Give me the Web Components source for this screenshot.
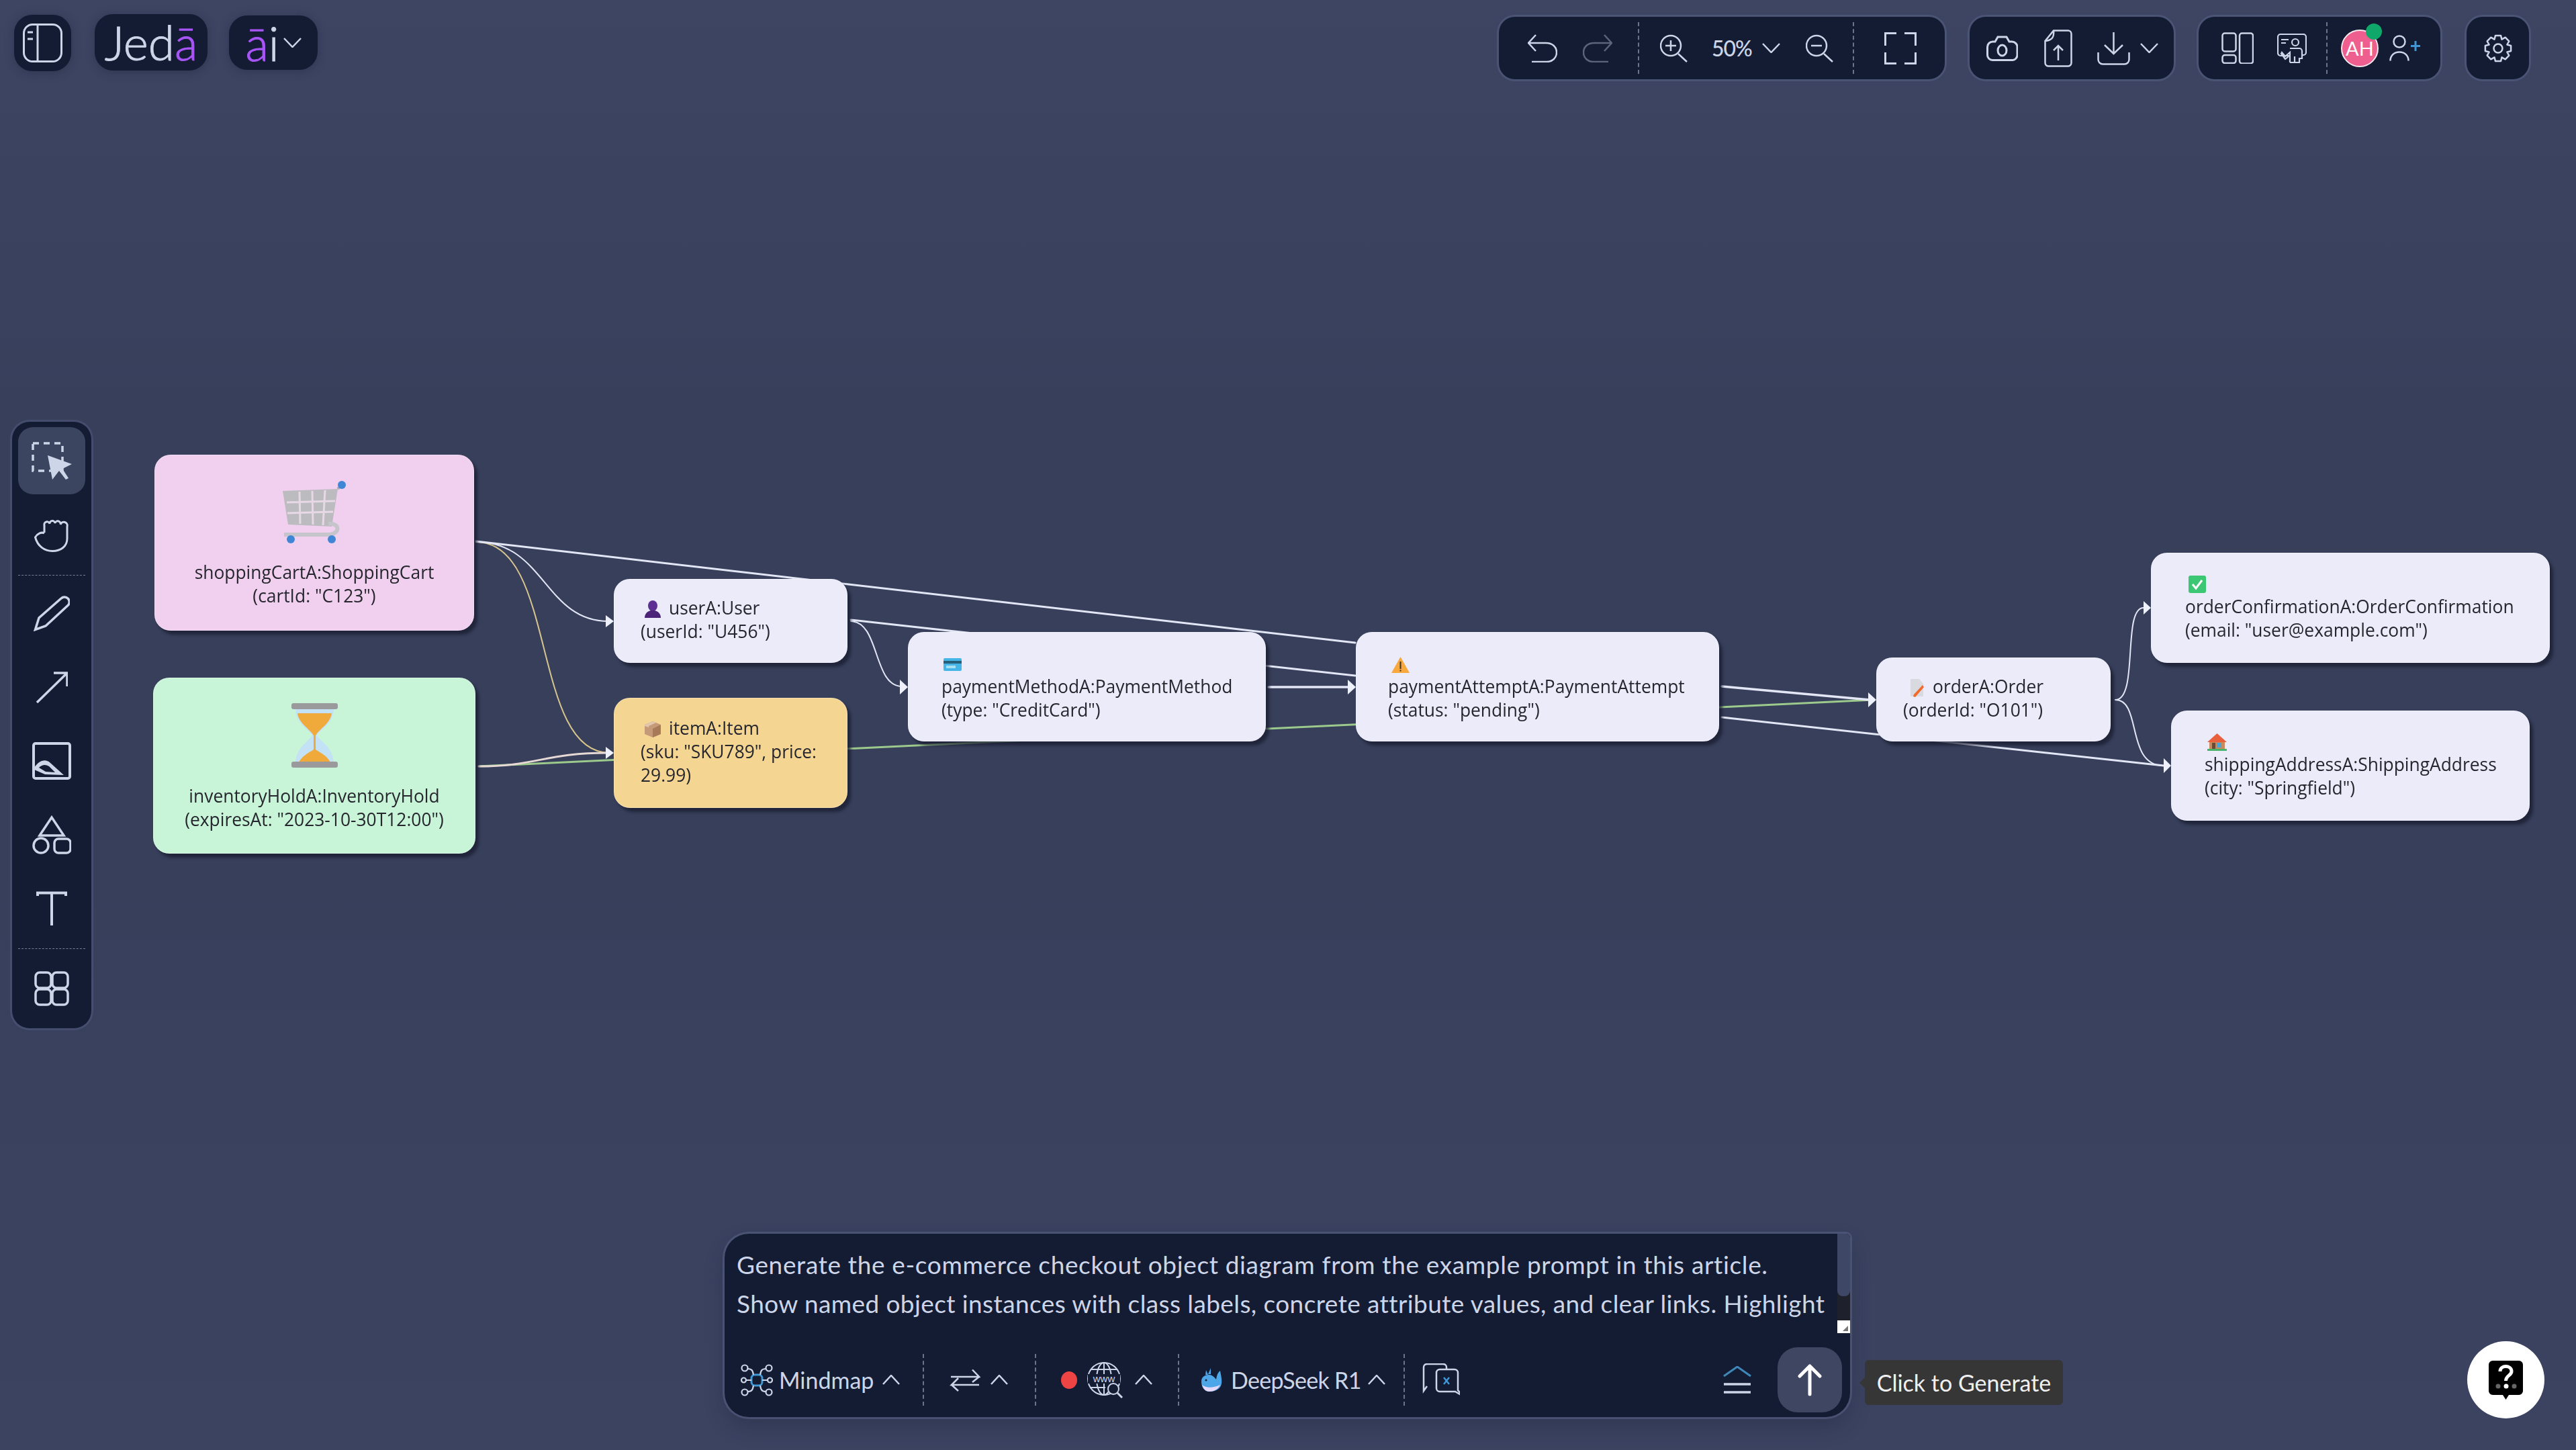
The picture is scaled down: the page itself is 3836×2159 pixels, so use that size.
<!DOCTYPE html>
<html lang="en"><head><meta charset="utf-8"><title>Jedā</title>
<style>html,body{margin:0;padding:0;background:#393f5b}</style></head>
<body>
<jeda-app>
  <diagram-canvas>
    <diagram-node x="230" y="677" w="476" h="262" bg="#f0d0ee" center>
      <ui-icon name="cart" block></ui-icon>shoppingCartA:ShoppingCart<br>(cartId: "C123")
    </diagram-node>
    <diagram-node x="228" y="1009" w="480" h="262" bg="#c8f5d8" center>
      <ui-icon name="hourglass" block></ui-icon>inventoryHoldA:InventoryHold<br>(expiresAt: "2023-10-30T12:00")
    </diagram-node>
    <diagram-node x="914" y="862" w="348" h="125" pad="40" lift><ui-icon name="user" gap="11" ml="5"></ui-icon>userA:User<br>(userId: "U456")</diagram-node>
    <diagram-node x="914" y="1039" w="348" h="164" pad="40" lift bg="#f5d592"><ui-icon name="box" gap="11" ml="5"></ui-icon>itemA:Item<br>(sku: "SKU789", price:<br>29.99)</diagram-node>
    <diagram-node x="1352" y="941" w="533" h="163" pad="50"><ui-icon name="card" ml="3"></ui-icon><br>paymentMethodA:PaymentMethod<br>(type: "CreditCard")</diagram-node>
    <diagram-node x="2019" y="941" w="541" h="163" pad="48"><ui-icon name="warn" ml="5"></ui-icon><br>paymentAttemptA:PaymentAttempt<br>(status: "pending")</diagram-node>
    <diagram-node x="2794" y="979" w="349" h="125" pad="40" lift><ui-icon name="order" gap="13" ml="9"></ui-icon>orderA:Order<br>(orderId: "O101")</diagram-node>
    <diagram-node x="3203" y="823" w="594" h="164" pad="51" lift><ui-icon name="check" ml="5"></ui-icon><br>orderConfirmationA:OrderConfirmation<br>(email: "user@example.com")</diagram-node>
    <diagram-node x="3233" y="1058" w="534" h="164" pad="50" lift><ui-icon name="house" ml="4"></ui-icon><br>shippingAddressA:ShippingAddress<br>(city: "Springfield")</diagram-node>
  </diagram-canvas>

  <top-bar>
    <brand-chip w="85" h="84" mt="-3"><ui-icon name="sidebar"></ui-icon></brand-chip>
    <brand-chip w="168" h="84" ml="35" mt="-4"><brand-word><span>Jed</span><b>ā</b></brand-word></brand-chip>
    <brand-chip w="132" h="81" ml="32" mt="-2"><brand-word><b>ā</b><span>i</span></brand-word><ui-icon name="chevdown" ml="6"></ui-icon></brand-chip>
    <tool-pill w="664" ml="auto">
      <ui-icon name="undo" ml="43"></ui-icon>
      <ui-icon name="redo" ml="38"></ui-icon>
      <dash-sep ml="38"></dash-sep>
      <ui-icon name="zoomin" ml="31"></ui-icon>
      <zoom-level>50%</zoom-level>
      <ui-icon name="chevdown" ml="14"></ui-icon>
      <ui-icon name="zoomout" ml="38"></ui-icon>
      <dash-sep ml="29"></dash-sep>
      <ui-icon name="full" ml="45"></ui-icon>
    </tool-pill>
    <tool-pill w="304" ml="37">
      <ui-icon name="camera" ml="25"></ui-icon>
      <ui-icon name="fileup" ml="39"></ui-icon>
      <ui-icon name="download" ml="37"></ui-icon>
      <ui-icon name="chevdown" ml="15"></ui-icon>
    </tool-pill>
    <tool-pill w="360" ml="37">
      <ui-icon name="layout" ml="34"></ui-icon>
      <ui-icon name="presenter" ml="35"></ui-icon>
      <dash-sep ml="29"></dash-sep>
      <user-avatar>AH</user-avatar>
      <ui-icon name="adduser" ml="16"></ui-icon>
    </tool-pill>
    <tool-pill w="93" ml="39" center><ui-icon name="gear"></ui-icon></tool-pill>
  </top-bar>

  <tool-rail>
    <rail-item active><ui-icon name="select"></ui-icon></rail-item>
    <rail-item style="margin-top:9px"><ui-icon name="hand"></ui-icon></rail-item>
    <rail-rule style="margin-top:11px"></rail-rule>
    <rail-item short style="margin-top:1px"><ui-icon name="pencil"></ui-icon></rail-item>
    <rail-item short><ui-icon name="arrow"></ui-icon></rail-item>
    <rail-item short><ui-icon name="frame"></ui-icon></rail-item>
    <rail-item short><ui-icon name="shapes"></ui-icon></rail-item>
    <rail-item short><ui-icon name="type"></ui-icon></rail-item>
    <rail-rule style="margin-top:4px"></rail-rule>
    <rail-item short style="margin-top:4px"><ui-icon name="grid"></ui-icon></rail-item>
  </tool-rail>

  <prompt-dock>
    <prompt-panel>
      <span slot="text" style="letter-spacing:.64px">Generate the e-commerce checkout object diagram from the example prompt in this article.</span>
      <span slot="text" style="display:block;letter-spacing:.4px">Show named object instances with class labels, concrete attribute values, and clear links. Highlight</span>
      <ui-icon name="mindmap"></ui-icon>
      <row-label ml="9" w="140">Mindmap</row-label>
      <ui-icon name="chevup" ml="14"></ui-icon>
      <dash-sep ml="34"></dash-sep>
      <ui-icon name="swap" ml="38"></ui-icon>
      <ui-icon name="chevup" ml="15"></ui-icon>
      <dash-sep ml="40"></dash-sep>
      <ui-icon name="dot" ml="37"></ui-icon>
      <ui-icon name="globe" ml="14"></ui-icon>
      <ui-icon name="chevup" ml="18"></ui-icon>
      <dash-sep ml="38"></dash-sep>
      <ui-icon name="whale" ml="30"></ui-icon>
      <row-label ml="13" w="191" style="letter-spacing:-.7px">DeepSeek R1</row-label>
      <ui-icon name="chevup" ml="13"></ui-icon>
      <dash-sep ml="27"></dash-sep>
      <ui-icon name="chat" ml="26"></ui-icon>
      <ui-icon name="expand" ml="auto"></ui-icon>
      <send-button></send-button>
    </prompt-panel>
    <hint-tip>Click to Generate</hint-tip>
    <help-button></help-button>
  </prompt-dock>
</jeda-app>

<script>
const INK='#cdd5e8';
function cog(cx,cy,ro,ri,n){let p=[];const s=Math.PI*2/n;for(let i=0;i<n;i++){const a=i*s-Math.PI/2;
 [[-.5,ri],[-.26,ro],[.26,ro],[.5,ri]].forEach(([k,r])=>{p.push((cx+r*Math.cos(a+k*s)).toFixed(1)+' '+(cy+r*Math.sin(a+k*s)).toFixed(1));});}
 return 'M'+p.join(' L')+'Z';}
const ICONS={
 sidebar:[59,58,3,`<rect x="1.5" y="1.5" width="56" height="55" rx="13"/><path d="M22 2V56M7 13h8M7 23h8"/>`],
 chevdown:[27,15,2.5,`<path d="M1 1L13.5 14L26 1"/>`],
 chevup:[26,15,2.5,`<path d="M1 14L13 1L25 14"/>`],
 undo:[44,42,2.5,`<path d="M12 1L1 13L12 25M1 13H27C37 13 43 19 43 27C43 35 37 41 28 41H6"/>`],
 redo:[44,42,2.5,`<g stroke="#5d6479"><path d="M32 1L43 13L32 25M43 13H17C7 13 1 19 1 27C1 35 7 41 16 41H38"/></g>`],
 zoomin:[41,42,2.5,`<circle cx="16" cy="17" r="15"/><path d="M27 29L40 41M16 9V25M8 17H24"/>`],
 zoomout:[41,42,2.5,`<circle cx="16" cy="17" r="15"/><path d="M27 29L40 41M8 17H24"/>`],
 full:[48,48,3,`<path d="M1.5 20V1.5H18M30 1.5H46.5V20M46.5 30V46.5H30M18 46.5H1.5V30"/>`],
 camera:[47,38,3,`<path d="M10 9H13L17 2H30L34 9H38A8 8 0 0 1 46 17V29A7.5 7.5 0 0 1 38 36.5H9A7.5 7.5 0 0 1 1.5 29V17A8 8 0 0 1 10 9Z"/><ellipse cx="23.5" cy="22" rx="6.5" ry="8"/>`],
 fileup:[42,56,2.5,`<path d="M14 1.5H36A5 5 0 0 1 40.500 6.500V49.500A5 5 0 0 1 36 54.500H6A5 5 0 0 1 1.500 49.500V17ZM14 1.500C15 10 13 16 1.500 17M21 46V24M14 31L21 24L28 31"/>`],
 download:[49,50,2.5,`<path d="M24.5 1V33M11 20L24.500 33L38 20M1.500 31V41A7 7 0 0 0 8.500 48.500H40.500A7 7 0 0 0 47.500 41V31"/>`],
 layout:[48,47,2.5,`<rect x="1.500" y="1.500" width="20" height="27" rx="3.500"/><rect x="1.500" y="34" width="20" height="12" rx="3.500"/><rect x="27" y="1.500" width="20" height="45" rx="3.500"/>`],
 presenter:[44,44,2.200,`<path d="M18 33H5A4 4 0 0 1 1 29V5A4 4 0 0 1 5 1H39A4 4 0 0 1 43 5V28A4 4 0 0 1 39 32H38"/><circle cx="27" cy="13" r="5"/><path d="M6 9H17M6 14H13M19 43V28L12 34L7 28L6 30L12 38L17 34M19 22H33A4 4 0 0 1 37 26V37H33V43H19M26 43V34"/>`],
 adduser:[46,39,2.500,`<circle cx="15" cy="10" r="8.500"/><path d="M1.500 38.500C1.500 31 7 25.500 15 25.500C23 25.500 28.500 31 28.500 38.500"/><path stroke="#3f97d6" stroke-width="3" d="M39 9V24M32 16.500H46"/>`],
 gear:[42,42,2.500,`<path stroke-linejoin="round" d="${cog(21,21,19.500,14.500,8)}"/><circle cx="21" cy="21" r="6.500"/>`],
 select:[60,56,3.500,`<rect x="2" y="2" width="44" height="41" stroke-dasharray="9 7"/><path fill="${INK}" stroke="none" d="M24 20L60 33L46 40L55 54L51 56L41 43L31 56Z"/>`],
 hand:[52,53,3,`<path d="M15 24V13A4 4 0 0 1 23 11A4 4 0 0 1 31 10A4 4 0 0 1 39 12A4 4 0 0 1 49 15V33C49 45 39 51.500 27 51.500C15 51.500 5 44 1.500 31C4 26 11 22.500 15 25"/>`],
 pencil:[54,54,3.500,`<path d="M2.500 51.500L8 34L41 5A7 7 0 0 1 51 15.500L18 46Z"/>`],
 arrow:[47,47,3.500,`<path d="M1 46L46 2M26 2H46V22"/>`],
 frame:[58,56,4,`<rect x="2" y="2" width="54" height="52" rx="3"/><path fill="${INK}" stroke="none" d="M3 38C10 27 20 24 27 31L47 49L19 48L3 41Z"/><path fill="#141c33" stroke="none" d="M10 38C15 33 20 33 25 36L34 45L20 44Z"/>`],
 shapes:[58,58,3.500,`<path d="M29 3L11 30H47Z"/><circle cx="13" cy="45" r="11"/><rect x="33" y="35" width="24" height="21" rx="6"/>`],
 type:[46,52,4,`<path d="M2 7V2.500H44V7M23 2.500V51"/>`],
 grid:[52,52,3.500,`<rect x="2" y="2" width="23" height="23" rx="6"/><rect x="27" y="2" width="23" height="23" rx="6"/><rect x="2" y="27" width="23" height="23" rx="6"/><rect x="27" y="27" width="23" height="23" rx="6"/>`],
 mindmap:[48,48,2.200,`<rect x="16" y="16" width="16" height="16" rx="5" stroke="#3f97d6" stroke-width="3"/><circle cx="6" cy="6" r="4.500"/><circle cx="42" cy="6" r="4.500"/><circle cx="4.500" cy="24" r="3.500"/><circle cx="43.500" cy="24" r="3.500"/><circle cx="6" cy="42" r="4.500"/><circle cx="42" cy="42" r="4.500"/><path d="M10 7C17 7 18 10 19 16M38 7C31 7 30 10 29 16M8 24H16M32 24H40M10 41C17 41 18 38 19 32M38 41C31 41 30 38 29 32"/>`],
 swap:[46,34,2.500,`<path d="M2 12H44L34 1.500M44 12L34 20M44 24H3L13 14M3 24L13 33"/>`],
 dot:[24,26,0,`<ellipse cx="12" cy="13" rx="12" ry="13" fill="#ef4444"/>`],
 globe:[54,54,2,`<circle cx="26" cy="25" r="24"/><ellipse cx="26" cy="25" rx="11" ry="24"/><path d="M26 1V49M6 11H46M5 38H28" stroke-width="2"/><rect x="2" y="18" width="48" height="14" fill="#141c33" stroke="none"/><text x="26" y="30" text-anchor="middle" font-family="Liberation Sans,sans-serif" font-size="15" fill="${INK}" stroke="none">www</text><circle cx="40" cy="40" r="8" fill="#141c33"/><path d="M46 46L53 53" stroke-width="3"/>`],
 whale:[34,36,0,`<path fill="#4da6e8" d="M3 20C3 11 11 10 15 10C19 10 23 14 25 17C26 13 26 8 31 4C32 10 34 17 33 23C32 31 24 35 15 35C7 35 3 28 3 20Z"/><path fill="#e6d8f8" d="M4 25C10 30 20 30 31 25C28 32 21 35 15 35C9 35 6 31 4 25Z"/><path fill="#4da6e8" d="M10 3L13 10H9ZM17 0L17 9H13Z"/><circle cx="10" cy="18" r="1.500" fill="#123"/>`],
 chat:[56,50,2.500,`<path d="M36 8V6A5 5 0 0 0 31 1H7A5 5 0 0 0 2 6V41L7 34"/><path d="M13 14A5 5 0 0 1 18 9H40A5 5 0 0 1 45 14V40L53 49L41 42H18A5 5 0 0 1 13 37Z" transform="translate(8 0)"/><path stroke="#3f97d6" d="M32 21L40 31M40 21L32 31"/>`],
 expand:[42,42,3,`<path stroke="#3f87b8" d="M1 15L21 1L41 15"/><path d="M1 27H41M1 39H41" stroke-width="3.500"/>`],
 cart:[95,94,0,`<path fill="#bcbcc0" d="M0 15L82 12L73 68L8 65Z"/><g stroke="#e7d8e6" stroke-width="3" fill="none"><path d="M6 32L78 30M7 48L75 46M25 16L26 64M44 15L45 65M63 14L60 66"/></g><path d="M82 12L88 5" stroke="#a9a9ae" stroke-width="4"/><circle cx="88" cy="6" r="6" fill="#3f86d6"/><path d="M68 64C85 62 86 78 70 80H2" fill="none" stroke="#c5c5cb" stroke-width="6"/><circle cx="12" cy="87" r="6" fill="#3f86d6"/><circle cx="73" cy="87" r="6" fill="#3f86d6"/>`],
 hourglass:[69,96,0,`<path fill="#c3e2f5" d="M6 8H63C63 30 42 40 38 48C42 56 63 66 63 90H6C6 66 27 56 31 48C27 40 6 30 6 8Z"/><path fill="#f0aa3c" d="M9 15H60C58 30 42 38 36 48V72H33V48C27 38 11 30 9 15Z"/><path fill="#f0aa3c" d="M11 88C16 78 26 74 34.500 68C43 74 53 78 58 88Z"/><rect width="69" height="9" rx="3" fill="#9a9a9c"/><rect y="87" width="69" height="9" rx="3" fill="#9a9a9c"/>`],
 user:[26,26,0,`<ellipse cx="13" cy="8" rx="7" ry="8" fill="#5d2f92"/><path fill="#4b2479" d="M1 26C1 19 6 16 10 15H16C20 16 25 19 25 26Z"/>`],
 box:[26,24,0,`<path fill="#c49a78" d="M13 0L25 5V19L13 24L1 19V5Z"/><path fill="#a97a58" d="M13 11V24L25 19V5Z"/><path fill="#e2c7ae" d="M1 5L13 0L18 2L7 7V9L1 7Z"/>`],
 card:[27,19,0,`<rect width="27" height="19" rx="2" fill="#45b4e6"/><rect y="4" width="27" height="4" fill="#255f7a"/><rect x="4" y="11" width="14" height="4" fill="#a7dff3"/>`],
 warn:[27,24,0,`<path fill="#f8a83c" d="M13.500 0L27 24H0Z"/><rect x="12.500" y="7" width="2" height="11" fill="#333"/><rect x="12.500" y="19.500" width="2" height="2" fill="#333"/>`],
 order:[22,27,0,`<path fill="#d9d9e0" d="M2 0H15L21 7V26H2Z"/><path fill="#f26a2b" d="M20 9L22 12L9 27L6 26L7 23Z"/>`],
 check:[26,26,0,`<rect width="26" height="26" rx="3" fill="#3cc774"/><path d="M6 13L11 19L20 7" stroke="#fff" stroke-width="3" fill="none"/>`],
 house:[29,26,0,`<rect x="3" y="11" width="23" height="13" fill="#c98a5e"/><rect x="14" y="14" width="7" height="7" fill="#49a4d8"/><rect x="7" y="14" width="5" height="10" fill="#6a4a33"/><path fill="#e8603c" d="M14.500 0L29 13H0Z"/><rect y="23" width="29" height="3" fill="#47b36b"/>`]
};
const def=(name,html,extra={})=>{
 customElements.define(name,class extends HTMLElement{
  constructor(){super();const r=this.attachShadow({mode:'open'});r.innerHTML=typeof html==='function'?html(this):html;}
  connectedCallback(){extra.init&&extra.init(this);}
 });
};
const ml=el=>{const m=el.getAttribute('ml');if(m)el.style.marginLeft=m==='auto'?'auto':m+'px';};

def('jeda-app',`<style>:host{display:flex;flex-direction:column;position:relative;isolation:isolate;width:3836px;height:2159px;overflow:hidden;
 background:linear-gradient(180deg,#3d4563 0,#3a425f 300px,#373f5b 640px,#373f5b 1300px,#3a4260 1800px,#3b4361 100%);
 font-family:"Lato","Open Sans",sans-serif;color:${INK}}</style><slot></slot>`);

def('diagram-canvas',`<style>:host{position:absolute;inset:0;z-index:-1;display:block}svg{position:absolute;left:0;top:0}</style>
<svg width="3836" height="2159" viewBox="0 0 3836 2159" fill="none" stroke-linecap="round">
 <path stroke="#d8c58c" stroke-width="2" d="M709 807C830 807 790 1121 908 1121"/>
 <path stroke="#9cc98c" stroke-width="3" d="M713 1141L2790 1042"/>
 <g stroke="#e3e6f5" stroke-width="3">
  <path d="M709 806L2018 957"/>
  <path stroke-width="2" d="M709 807C811 807 811 925 906 925"/>
  <path stroke="#e6d8d4" d="M713 1141C800 1141 810 1121 906 1121"/>
  <path stroke-width="2" d="M1267 925C1310 925 1300 1022 1343 1022"/>
  <path d="M1267 923L2018 1006"/>
  <path stroke-width="3.500" d="M1889 1023H2010"/>
  <path stroke-width="3.500" d="M2564 1022L2784 1042"/>
  <path d="M2564 1068L3222 1140"/>
  <path stroke-width="2" d="M3150 1042C3185 1042 3160 905 3192 905"/>
  <path stroke-width="2" d="M3150 1042C3190 1042 3165 1140 3222 1140"/>
 </g>
 <g fill="#eef0fb">
  <path d="M902 916L914 925L902 934Z"/><path d="M902 1112L914 1121L902 1130Z"/>
  <path d="M1340 1012L1352 1023L1340 1034Z"/><path d="M2007 1012L2019 1023L2007 1034Z"/>
  <path d="M2782 1031L2794 1042L2782 1053Z"/><path d="M3222 1129L3233 1140L3222 1151Z"/>
  <path d="M3192 895L3203 905L3192 915Z"/>
 </g>
</svg><slot></slot>`);

def('diagram-node',`<style>:host{position:absolute;display:flex;flex-direction:column;justify-content:center;box-sizing:border-box;
 border-radius:24px;box-shadow:5px 6px 4px rgba(25,30,48,.75),inset 0 0 0 1px rgba(255,255,255,.25);
 font:26.4px/35px "Open Sans",sans-serif;color:#26262e;white-space:nowrap}
 div{filter:blur(.45px)}</style><div><slot></slot></div>`,{init(el){
  const g=k=>el.getAttribute(k);
  el.style.cssText+=`;left:${g('x')}px;top:${g('y')}px;width:${g('w')}px;height:${g('h')}px;background:${g('bg')||'#ebebfa'};padding-left:${g('pad')||0}px`;
  if(el.hasAttribute('center')){el.style.textAlign='center';el.style.paddingTop='4px';}
  if(el.hasAttribute('lift'))el.style.paddingBottom='4px';
 }});

def('ui-icon',el=>{const [w,h,sw,inner]=ICONS[el.getAttribute('name')];
 return `<style>:host{display:inline-flex;flex:none;vertical-align:middle}svg{display:block}</style>
 <svg width="${w}" height="${h}" viewBox="0 0 ${w} ${h}" fill="none" stroke="${INK}" stroke-width="${sw}">${inner}</svg>`;},
 {init(el){ml(el);if(el.hasAttribute('gap'))el.style.marginRight=el.getAttribute('gap')+'px';
  if(el.hasAttribute('block')){el.style.display='flex';el.style.justifyContent='center';el.style.marginBottom='25px';}}});

def('top-bar',`<style>:host{display:flex;align-items:flex-start;box-sizing:border-box;height:118px;padding:25px 70px 0 21px;flex:none}</style><slot></slot>`);
def('brand-chip',`<style>:host{display:flex;align-items:center;justify-content:center;flex:none;box-sizing:border-box;background:#141c33;border-radius:27px;box-shadow:0 2px 14px rgba(25,30,50,.35)}</style><slot></slot>`,
 {init(el){ml(el);el.style.width=el.getAttribute('w')+'px';el.style.height=el.getAttribute('h')+'px';el.style.marginTop=el.getAttribute('mt')+'px';}});
def('brand-word',`<style>:host{display:inline-block;font:300 71px/80px "Lato",sans-serif;-webkit-text-stroke:1px currentColor;color:${INK}}::slotted(b){font-weight:300;color:#a855f7}</style><slot></slot>`);
def('tool-pill',`<style>:host{display:flex;align-items:center;flex:none;box-sizing:border-box;height:93px;background:#141c33;border-radius:24px;box-shadow:0 0 0 3px rgba(86,96,132,.55)}</style><slot></slot>`,
 {init(el){ml(el);el.style.width=el.getAttribute('w')+'px';if(el.hasAttribute('center'))el.style.justifyContent='center';}});
def('dash-sep',`<style>:host{display:block;flex:none;width:0;height:77px;border-left:2px dashed #6d7488}</style>`,{init:ml});
def('zoom-level',`<style>:host{display:block;flex:none;width:61px;margin-left:36px;font:500 32px/40px "Lato",sans-serif;letter-spacing:-1px;white-space:nowrap}</style><slot></slot>`);
def('user-avatar',`<style>:host{display:block;position:relative;flex:none;width:56px;height:56px;margin-left:20px;box-sizing:border-box;border-radius:50%;background:#ee5f8f;border:2px solid #f5e8ee;color:#fff;font:400 29px/52px "Lato",sans-serif;text-align:center}
 i{position:absolute;right:-7px;top:-11px;width:24px;height:24px;border-radius:50%;background:#10a86a}</style><slot></slot><i></i>`);

def('tool-rail',`<style>:host{display:flex;flex-direction:column;align-items:center;flex:none;box-sizing:border-box;margin:510px 0 0 18px;width:118px;height:903px;padding-top:8px;background:#141c33;border-radius:26px;box-shadow:0 0 0 3px rgba(86,96,132,.45)}</style><slot></slot>`);
def('rail-item',`<style>:host{display:flex;align-items:center;justify-content:center;flex:none;width:100px;height:100px;box-sizing:border-box;border-radius:22px}
 :host([active]){background:#3c4560}:host([short]){height:110px}</style><slot></slot>`);
def('rail-rule',`<style>:host{display:block;flex:none;width:100px;height:0;border-top:1px dashed #777e92}</style>`);

def('prompt-dock',`<style>:host{display:flex;align-items:flex-end;flex:none;margin-top:auto;padding:0 47px 47px 1079px}</style><slot></slot>`);
def('prompt-panel',`<style>:host{display:block;position:relative;flex:none;box-sizing:border-box;width:1676px;height:273px;margin-bottom:2px;padding-top:3px;background:#141c33;border-radius:36px 6px 36px 36px;box-shadow:0 0 0 3px rgba(86,96,132,.6),0 14px 30px rgba(25,30,50,.3)}
 .text{box-sizing:border-box;height:145px;overflow:hidden;padding:14px 0 0 18px;font:37px/58px "Lato",sans-serif;white-space:nowrap;color:${INK}}
 .row{display:flex;align-items:center;box-sizing:border-box;height:97px;margin-top:21px;padding:0 12px 0 24px}
 .track{position:absolute;right:0;top:0;width:19px;height:129px;background:#1e202c;border-radius:0 6px 0 0}
 .thumb{position:absolute;right:0;top:0;width:19px;height:93px;background:#3e4765;border-radius:0 6px 8px 8px}
 .grip{position:absolute;right:0;top:129px;width:19px;height:19px;background:#fff}
 .grip svg{display:block}</style>
 <div class="text"><slot name="text"></slot></div>
 <div class="track"></div><div class="thumb"></div>
 <div class="grip"><svg width="19" height="19" viewBox="0 0 19 19"><path d="M8 16L16 8V16Z" fill="#777"/></svg></div>
 <div class="row"><slot></slot></div>`);
def('row-label',`<style>:host{display:block;flex:none;font:34px/44px "Lato",sans-serif;white-space:nowrap}</style><slot></slot>`,
 {init(el){ml(el);el.style.width=el.getAttribute('w')+'px';}});
def('send-button',`<style>:host{display:flex;align-items:center;justify-content:center;flex:none;width:96px;height:97px;margin-left:39px;border-radius:30px;background:#3f4661}</style>
 <svg width="36" height="48" viewBox="0 0 36 48" fill="none" stroke="#fff" stroke-width="5" stroke-linecap="round" stroke-linejoin="round"><path d="M18 45V3M3 18L18 3L33 18"/></svg>`);
def('hint-tip',`<style>:host{display:block;position:relative;flex:none;box-sizing:border-box;width:295px;height:67px;margin:0 0 20px 22px;background:#363636;border-radius:6px;color:#f0f0f0;font:34px/67px "Lato",sans-serif;text-align:center;white-space:nowrap}
 :host::before{content:"";position:absolute;left:-8px;top:25px;border:9px solid transparent;border-left:0;border-right-color:#363636}</style><slot></slot>`);
def('help-button',`<style>:host{display:flex;align-items:center;justify-content:center;flex:none;width:115px;height:115px;margin-left:auto;border-radius:50%;background:#fff}</style>
 <svg width="51" height="58" viewBox="0 0 51 58"><path d="M6 0H45A6 6 0 0 1 51 6V45A6 6 0 0 1 45 51H30L25.500 58L21 51H6A6 6 0 0 1 0 45V6A6 6 0 0 1 6 0Z" fill="#000"/><path d="M17 16C17 6 34 6 34 16C34 22 25.500 22 25.500 30" fill="none" stroke="#fff" stroke-width="5"/><circle cx="14" cy="38" r="3.500" fill="#666"/><circle cx="26" cy="38" r="3.500" fill="#fff"/><circle cx="38" cy="38" r="3.500" fill="#666"/></svg>`);
</script>
</body></html>
